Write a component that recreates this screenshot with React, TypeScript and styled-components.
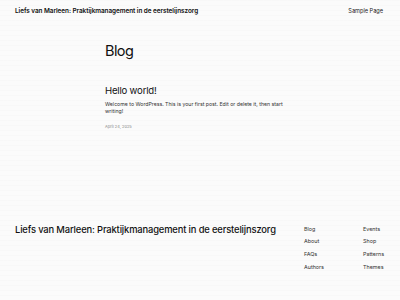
import React from "react";
import styled, { createGlobalStyle } from "styled-components";

const Global = createGlobalStyle`
  html, body { margin: 0; padding: 0; }
  body {
    background-color: #fbfbfb;
    background-image: repeating-linear-gradient(
      to bottom,
      rgba(0,0,0,0.012) 0px,
      rgba(0,0,0,0.012) 1px,
      transparent 1px,
      transparent 5px
    );
    font-family: Inter, "Liberation Sans", sans-serif;
    color: #111;
  }
`;

const Page = styled.div`
  width: 400px;
  height: 300px;
  display: flex;
  flex-direction: column;
  overflow: hidden;
`;

const Header = styled.header`
  display: flex;
  justify-content: space-between;
  align-items: center;
  padding: 5px 15px 0 15px;
  height: 11px;
`;

const SiteTitle = styled.div`
  font-size: 6.4px;
  font-weight: 600;
  letter-spacing: -0.05px;
`;

const NavLink = styled.a`
  font-size: 5.6px;
  color: #222;
  text-decoration: none;
  margin-right: 2px;
`;

const Main = styled.main`
  width: 190px;
  margin: 0 auto;
  padding-top: 25px;
`;

const PageTitle = styled.h1`
  margin: 0;
  font-size: 14.5px;
  font-weight: 400;
  letter-spacing: -0.6px;
  line-height: 20px;
`;

const PostTitle = styled.h2`
  margin: 23px 0 0 0;
  font-size: 9.6px;
  font-weight: 400;
  letter-spacing: -0.2px;
  line-height: 14px;
`;

const Excerpt = styled.p`
  margin: 3px 0 0 0;
  font-size: 5.2px;
  line-height: 7px;
  color: #333;
`;

const PostDate = styled.div`
  margin-top: 9px;
  font-size: 4px;
  color: #888;
`;

const Footer = styled.footer`
  margin-top: auto;
  display: flex;
  justify-content: space-between;
  padding: 0 15px 30px 15px;
`;

const FooterTitle = styled.div`
  font-size: 9.4px;
  font-weight: 500;
  letter-spacing: -0.15px;
  margin-top: -2px;
`;

const FooterNav = styled.nav`
  display: grid;
  grid-template-columns: 59px 22px;
  row-gap: 6.8px;
`;

const FooterLink = styled.a`
  font-size: 5.4px;
  line-height: 6px;
  color: #333;
  text-decoration: none;
`;

const links = [
  ["Blog", "Events"],
  ["About", "Shop"],
  ["FAQs", "Patterns"],
  ["Authors", "Themes"],
];

export default function App() {
  return (
    <Page>
      <Global />
      <Header>
        <SiteTitle>Liefs van Marleen: Praktijkmanagement in de eerstelijnszorg</SiteTitle>
        <NavLink href="#">Sample Page</NavLink>
      </Header>
      <Main>
        <PageTitle>Blog</PageTitle>
        <PostTitle>Hello world!</PostTitle>
        <Excerpt>
          Welcome to WordPress. This is your first post. Edit or delete it, then start writing!
        </Excerpt>
        <PostDate>April 24, 2025</PostDate>
      </Main>
      <Footer>
        <FooterTitle>Liefs van Marleen: Praktijkmanagement in de eerstelijnszorg</FooterTitle>
        <FooterNav>
          {links.flat().map((l) => (
            <FooterLink key={l} href="#">
              {l}
            </FooterLink>
          ))}
        </FooterNav>
      </Footer>
    </Page>
  );
}
